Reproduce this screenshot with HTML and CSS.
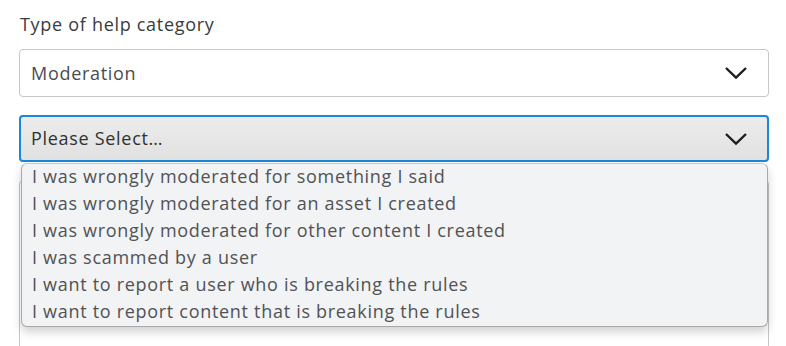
FILE: index.html
```html
<!DOCTYPE html>
<html>
<head>
<meta charset="utf-8">
<link rel="stylesheet" href="styles.css">
</head>
<body>
<div class="form">
  <div class="label">Type of help category</div>
  <div class="select">
    <span class="value">Moderation</span>
    <svg class="chev" width="24" height="14" viewBox="0 0 24 14"><path d="M2 2 L12 11.5 L22 2" fill="none" stroke="#1c1c1c" stroke-width="2.4"/></svg>
  </div>
  <div class="field-wrap">
    <div class="select active">
      <span class="value">Please Select…</span>
      <svg class="chev" width="24" height="14" viewBox="0 0 24 14"><path d="M2 2 L12 11.5 L22 2" fill="none" stroke="#1c1c1c" stroke-width="2.4"/></svg>
    </div>
    <div class="below"></div>
    <ul class="menu">
      <li>I was wrongly moderated for something I said</li>
      <li>I was wrongly moderated for an asset I created</li>
      <li>I was wrongly moderated for other content I created</li>
      <li>I was scammed by a user</li>
      <li>I want to report a user who is breaking the rules</li>
      <li>I want to report content that is breaking the rules</li>
    </ul>
  </div>
</div>
</body>
</html>
```
FILE: styles.css
```css
html, body {
  margin: 0;
  padding: 0;
  background: #ffffff;
  overflow: hidden;
}
body {
  font-family: "Open Sans", "Noto Sans", sans-serif;
  color: #393b3d;
  letter-spacing: 0.7px;
}
.form {
  padding: 12px 17px 0 19px;
  display: flex;
  flex-direction: column;
}
.label {
  font-size: 18px;
  line-height: 24px;
  margin-left: 1px;
  margin-bottom: 13px;
}
.select {
  box-sizing: border-box;
  height: 48px;
  border: 1px solid #c6c6c6;
  border-radius: 4px;
  display: flex;
  align-items: center;
  justify-content: space-between;
  padding: 0 20px 0 11px;
  font-size: 18px;
  color: #4a4c4e;
}
.select .value {
  margin-top: -1px;
}
.chev {
  display: block;
}
.field-wrap {
  position: relative;
  margin-top: 18px;
}
.select.active {
  height: 47px;
  border: 2px solid #1a87d9;
  background: linear-gradient(#ececec, #e1e1e1);
  padding-left: 10px;
  padding-right: 19px;
  color: #2f3133;
}
.below {
  margin-top: 18px;
  height: 200px;
  border: 1px solid #c6c6c6;
  border-radius: 4px;
}
.menu {
  position: absolute;
  top: 48px;
  left: 2px;
  right: 1px;
  margin: 0;
  padding: 0;
  list-style: none;
  background: #f2f3f5;
  border: 1px solid #a9a9a9;
  border-top-color: #c9c9c9;
  border-radius: 6px;
  box-shadow: 0 5px 10px rgba(0, 0, 0, 0.18);
}
.menu li {
  font-size: 18px;
  line-height: 25px;
  padding: 0 0 2px 10px;
  color: #505254;
  white-space: nowrap;
}
```
